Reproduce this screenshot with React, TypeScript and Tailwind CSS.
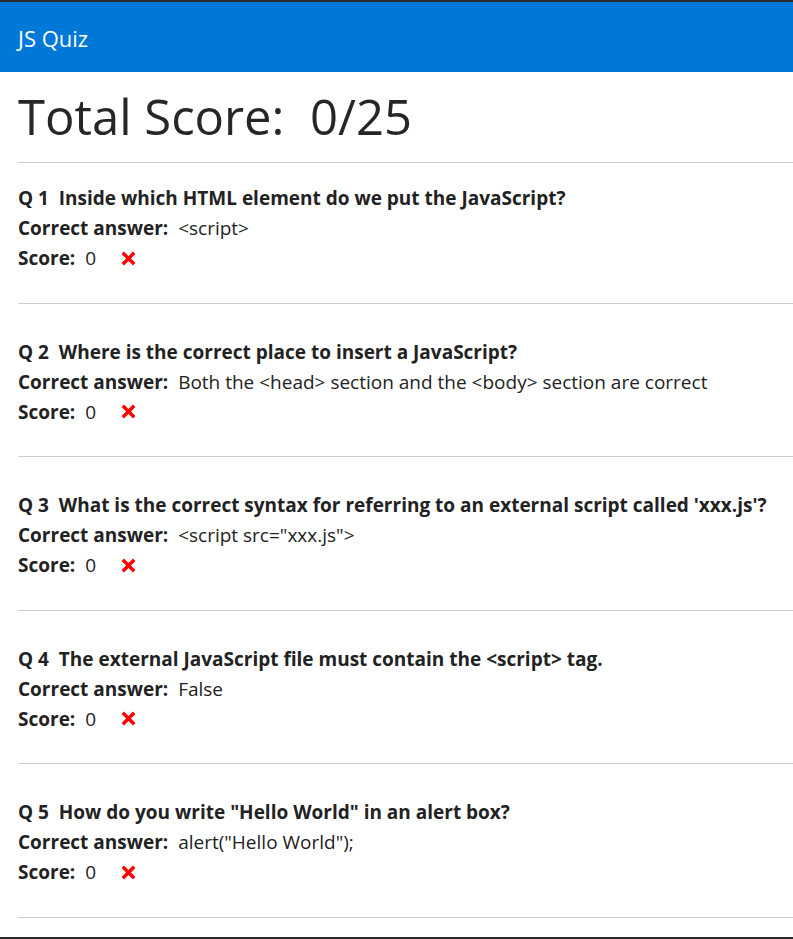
const QUESTIONS = [
  { q: 'Inside which HTML element do we put the JavaScript?', a: '<script>' },
  { q: 'Where is the correct place to insert a JavaScript?', a: 'Both the <head> section and the <body> section are correct' },
  { q: "What is the correct syntax for referring to an external script called 'xxx.js'?", a: '<script src="xxx.js">' },
  { q: 'The external JavaScript file must contain the <script> tag.', a: 'False' },
  { q: 'How do you write "Hello World" in an alert box?', a: 'alert("Hello World");' },
];

function Cross() {
  return (
    <svg width="15" height="15" viewBox="0 0 15 15" className="ml-[25px]">
      <path d="M3 3 L12 12 M12 3 L3 12" stroke="#ff0000" strokeWidth="3.4" strokeLinecap="square" />
    </svg>
  );
}

export default function App() {
  return (
    <div
      className="h-[939px] flex flex-col border-t-2 border-b-2 border-[#2b2b2b] bg-white text-[#222] overflow-hidden"
      style={{ fontFamily: '"Open Sans", "Noto Sans", sans-serif' }}
    >
      <header className="h-[70px] shrink-0 bg-[#0078d7] flex items-center px-[18px] pt-[2px]">
        <span className="text-white text-[22px]">JS Quiz</span>
      </header>
      <main className="pl-[18px] flex-1">
        <h1 className="text-[49px] text-[#262626] leading-none mt-[20px] mb-[21px] whitespace-pre">Total Score:  0/25</h1>
        {QUESTIONS.map((item, i) => (
          <section key={i} className={`border-t border-[#cfcfcf] ${i === 0 ? 'pt-[20px]' : 'pt-[33px]'} pb-[29.5px]`}>
            <div className="text-[19px] leading-[30px] font-bold whitespace-pre">Q {i + 1}  {item.q}</div>
            <div className="text-[19px] leading-[30px] whitespace-pre">
              <span className="font-bold">Correct answer:  </span>{item.a}
            </div>
            <div className="text-[19px] leading-[30px] whitespace-pre flex items-center">
              <span className="font-bold">Score:  </span>0<Cross />
            </div>
          </section>
        ))}
        <div className="border-t border-[#cfcfcf]" />
      </main>
    </div>
  );
}
